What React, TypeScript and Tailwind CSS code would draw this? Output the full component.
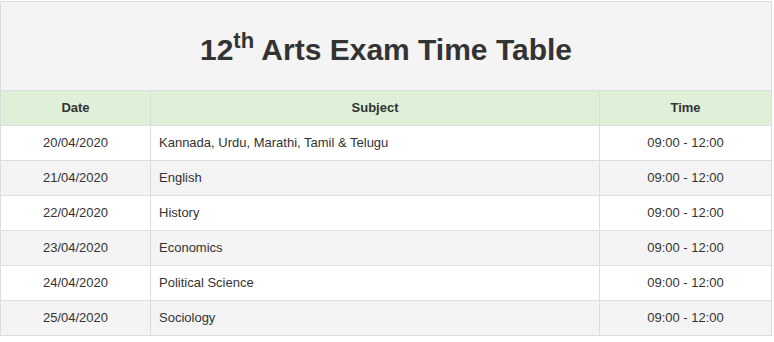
import React from "react";

const rows = [
  ["20/04/2020", "Kannada, Urdu, Marathi, Tamil & Telugu"],
  ["21/04/2020", "English"],
  ["22/04/2020", "History"],
  ["23/04/2020", "Economics"],
  ["24/04/2020", "Political Science"],
  ["25/04/2020", "Sociology"],
];

export default function App() {
  return (
    <div className="pt-[1px] bg-white text-[#333]" style={{ fontFamily: '"Liberation Sans", Arial, sans-serif' }}>
      <div className="w-[772px] border-l border-t border-[#dddddd] grid grid-cols-[150px_449px_172px]">
        <div className="col-span-3 h-[89px] bg-[#f4f4f4] border-r border-b border-[#dddddd] flex items-center justify-center">
          <h2 className="text-[30px] font-bold leading-none mt-[8px]">
            12<sup className="text-[22px] top-[-12px]">th</sup> Arts Exam Time Table
          </h2>
        </div>
        {["Date", "Subject", "Time"].map((h) => (
          <div
            key={h}
            className="h-[35px] bg-[#dff0d8] border-r border-b border-[#dddddd] flex items-center justify-center text-[13px] font-bold"
          >
            {h}
          </div>
        ))}
        {rows.map(([d, s], i) => {
          const bg = i % 2 === 1 ? "bg-[#f4f4f4]" : "bg-white";
          return (
            <React.Fragment key={d}>
              <div className={`h-[35px] ${bg} border-r border-b border-[#dddddd] flex items-center justify-center text-[13px]`}>
                {d}
              </div>
              <div className={`h-[35px] ${bg} border-r border-b border-[#dddddd] flex items-center pl-2 text-[13px]`}>
                {s}
              </div>
              <div className={`h-[35px] ${bg} border-r border-b border-[#dddddd] flex items-center justify-center text-[13px]`}>
                09:00 - 12:00
              </div>
            </React.Fragment>
          );
        })}
      </div>
    </div>
  );
}
